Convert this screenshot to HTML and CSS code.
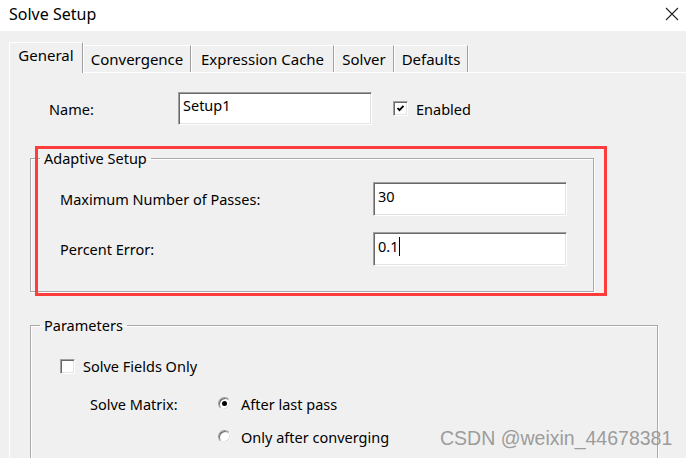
FILE: index.html
```html
<!DOCTYPE html>
<html lang="en">
<head>
<meta charset="utf-8">
<title>Solve Setup</title>
<link rel="stylesheet" href="styles.css">
</head>
<body>
<div class="window">
  <header class="titlebar">
    <span class="title">Solve Setup</span>
    <svg class="close" width="14" height="14" viewBox="0 0 14 14" aria-hidden="true">
      <path d="M1 1 L13 13 M13 1 L1 13" stroke="#222" stroke-width="1.1" fill="none"/>
    </svg>
  </header>
  <div class="body">
    <nav class="tabs">
      <div class="tab tab-general active">General</div>
      <div class="tab tab-conv">Convergence</div>
      <div class="tab tab-expr">Expression Cache</div>
      <div class="tab tab-solver">Solver</div>
      <div class="tab tab-defaults">Defaults</div>
    </nav>
    <div class="page">
      <div class="name-row">
        <span class="name-label">Name:</span>
        <div class="textbox name-box">Setup1</div>
        <span class="check">
          <svg width="11" height="11" viewBox="0 0 11 11" aria-hidden="true">
            <polyline points="2.5,5 4.5,7.2 8.5,2.8" fill="none" stroke="#000" stroke-width="1.8"/>
          </svg>
        </span>
        <span class="check-label">Enabled</span>
      </div>

      <fieldset class="group adaptive">
        <legend>Adaptive Setup</legend>
        <div class="form-grid">
          <span class="lbl">Maximum Number of Passes:</span>
          <div class="textbox">30</div>
          <span class="lbl">Percent Error:</span>
          <div class="textbox">0.1<span class="caret"></span></div>
        </div>
      </fieldset>

      <fieldset class="group params">
        <legend>Parameters</legend>
        <div class="check-row">
          <span class="check"></span>
          <span class="check-label">Solve Fields Only</span>
        </div>
        <div class="matrix-row">
          <span class="matrix-label">Solve Matrix:</span>
          <div class="radios">
            <div class="radio-row"><span class="radio on"></span><span>After last pass</span></div>
            <div class="radio-row"><span class="radio"></span><span>Only after converging</span></div>
          </div>
        </div>
      </fieldset>
    </div>
  </div>
  <div class="highlight"></div>
  <div class="watermark">CSDN @weixin_44678381</div>
</div>
</body>
</html>
```
FILE: styles.css
```css
html, body {
  margin: 0;
  padding: 0;
}
body {
  width: 686px;
  height: 458px;
  overflow: hidden;
  background: #f0f0f0;
  font-family: "Noto Sans", "Open Sans", sans-serif;
  font-size: 14.5px;
  color: #000;
}
.window {
  position: relative;
  width: 686px;
  height: 458px;
  overflow: hidden;
}
.titlebar {
  height: 31px;
  background: #fff;
  display: flex;
  align-items: center;
  justify-content: space-between;
  padding: 0 7px 4px 9px;
  box-sizing: border-box;
}
.title {
  font-size: 16px;
  color: #000;
}
.close {
  display: block;
}

.tabs {
  display: flex;
  align-items: flex-end;
  margin-top: 11px;
  padding-left: 9px;
  height: 30px;
  position: relative;
  z-index: 2;
}
.tab {
  box-sizing: border-box;
  height: 27px;
  line-height: 24px;
  padding-top: 1px;
  font-size: 15px;
  text-align: center;
  border-top: 1px solid #fff;
  border-left: 1px solid #fff;
  border-right: 1px solid #a0a0a0;
  box-shadow: 1px 0 0 #fcfcfc;
  background: #f0f0f0;
}
.tab.active {
  height: 31px;
  margin-bottom: -1px;
  line-height: 24px;
  padding-top: 0;
}
.tab-general { width: 74px; }
.tab-conv { width: 108px; }
.tab-expr { width: 143px; }
.tab-solver { width: 60px; }
.tab-defaults { width: 74px; }

.page {
  margin-left: 9px;
  border-top: 1px solid #fff;
  border-left: 1px solid #fff;
  height: 400px;
}

.name-row {
  display: flex;
  align-items: center;
  margin-top: 19px;
  padding-left: 39px;
}
.name-label {
  width: 129px;
}
.textbox {
  box-sizing: border-box;
  width: 194px;
  height: 34px;
  background: #fff;
  border: 1px solid;
  border-color: #a0a0a0 #fff #fff #a0a0a0;
  box-shadow: inset 1px 1px 0 #696969, inset -1px -1px 0 #e3e3e3;
  padding: 0 4px 5px 4px;
  line-height: 27px;
  display: flex;
  align-items: center;
  color: #000;
}
.name-box {
  height: 33px;
  padding-bottom: 7px;
}
.caret {
  display: inline-block;
  width: 1px;
  height: 19px;
  background: #000;
  margin-left: 1px;
}
.check {
  box-sizing: border-box;
  width: 15px;
  height: 15px;
  background: #fff;
  border: 1px solid;
  border-color: #a0a0a0 #fff #fff #a0a0a0;
  box-shadow: inset 1px 1px 0 #696969, inset -1px -1px 0 #e3e3e3;
  display: flex;
  align-items: center;
  justify-content: center;
  flex: none;
}
.check svg {
  display: block;
}
.name-row .check {
  margin-left: 21px;
}
.check-label {
  margin-left: 8px;
}

.group {
  margin: 0 0 0 20px;
  padding: 0;
  border: 1px solid #a9a9a9;
  box-shadow: inset 1px 1px 0 #fff, 1px 1px 0 #fff;
  min-width: 0;
}
.group legend {
  margin-left: 9px;
  padding: 0 4px;
  line-height: 20px;
  font-size: 14.5px;
}
.adaptive {
  width: 564px;
  box-sizing: border-box;
  margin-top: 23px;
  padding: 14px 0 25px 0;
}
.form-grid {
  display: grid;
  grid-template-columns: 313px 194px;
  row-gap: 16px;
  align-items: center;
  margin-left: 29px;
}

.params {
  width: 628px;
  box-sizing: border-box;
  margin-top: 23px;
  padding: 21px 0 0 0;
  height: 160px;
}
.check-row {
  display: flex;
  align-items: center;
  height: 20px;
  margin-left: 29px;
}
.matrix-row {
  display: flex;
  align-items: flex-start;
  margin-top: 18px;
  margin-left: 59px;
}
.matrix-label {
  width: 128px;
  line-height: 20px;
}
.radios {
  display: flex;
  flex-direction: column;
  gap: 13px;
}
.radio-row {
  display: flex;
  align-items: center;
  height: 20px;
  gap: 10px;
}
.radio {
  box-sizing: border-box;
  width: 13px;
  height: 13px;
  border-radius: 50%;
  background: #fff;
  border: 1px solid;
  border-color: #9a9a9a #f4f4f4 #f4f4f4 #9a9a9a;
  box-shadow: inset 1px 1px 0 #6a6a6a, inset -1px -1px 0 #e0e0e0;
  display: flex;
  align-items: center;
  justify-content: center;
  margin-top: -2px;
}
.radio.on::after {
  content: "";
  width: 5px;
  height: 5px;
  border-radius: 50%;
  background: #000;
}

.highlight {
  position: absolute;
  left: 35px;
  top: 146px;
  width: 572px;
  height: 150px;
  box-sizing: border-box;
  border: 3px solid #ff3c3c;
  pointer-events: none;
}
.watermark {
  position: absolute;
  left: 440px;
  top: 429px;
  font-family: "Liberation Sans", Arial, sans-serif;
  font-size: 19.5px;
  line-height: 1;
  color: #9c9c9c;
  white-space: nowrap;
}
```
